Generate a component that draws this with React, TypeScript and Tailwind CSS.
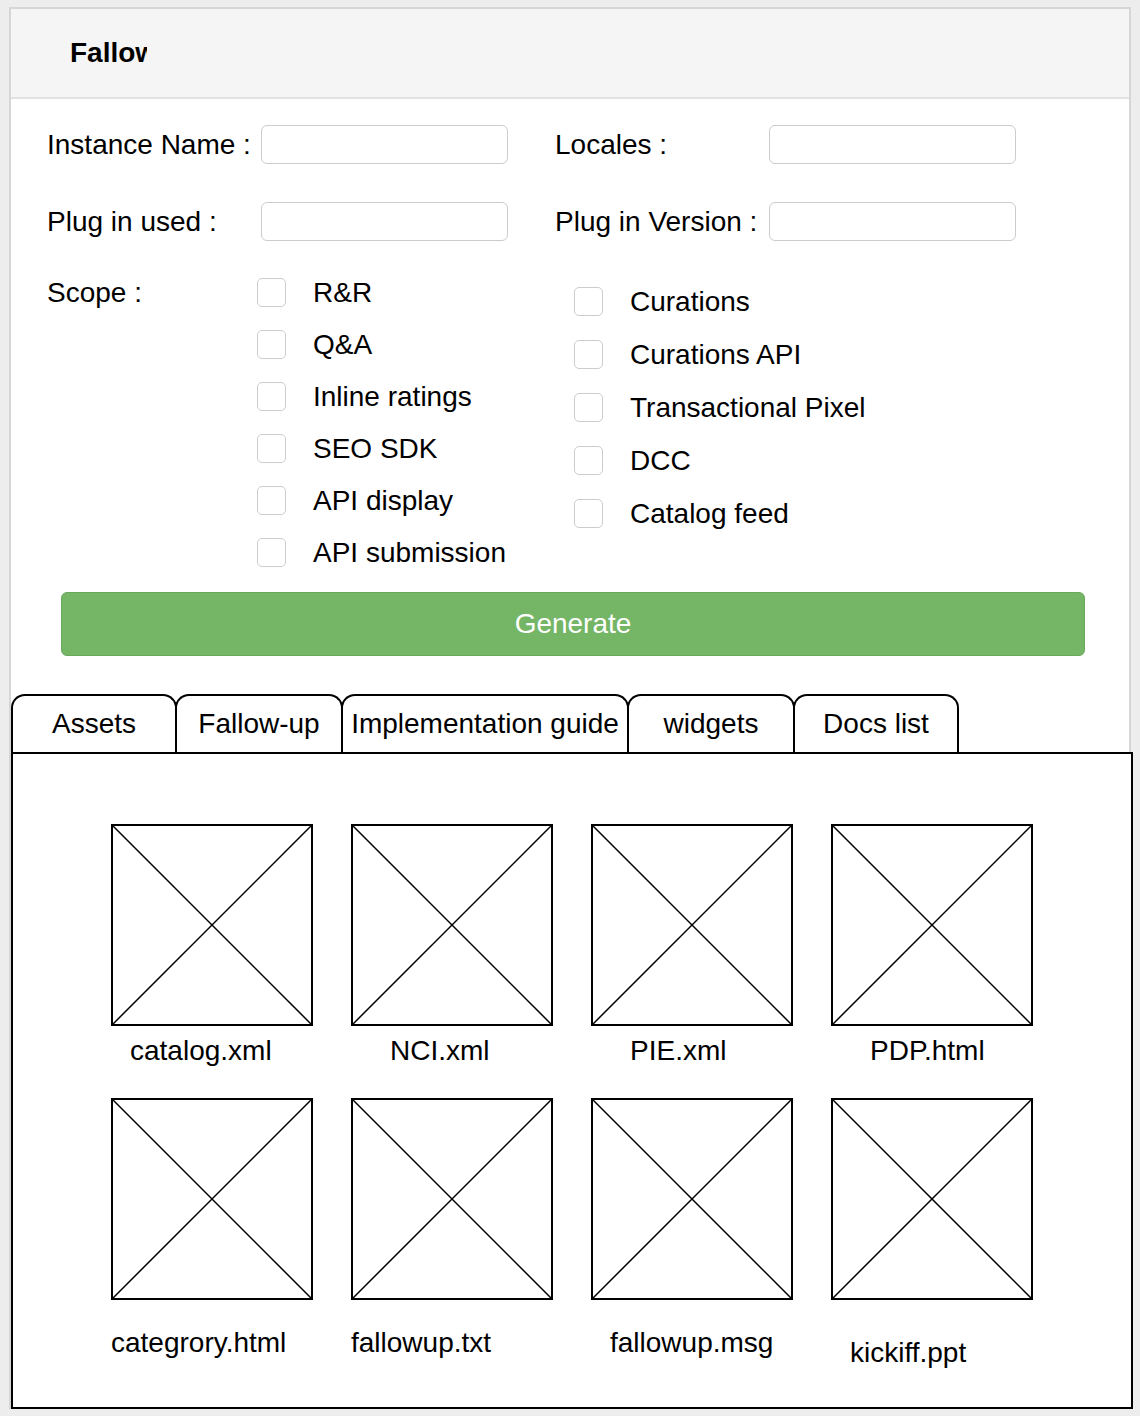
const font = { fontFamily: '"Liberation Sans", Arial, Helvetica, sans-serif' }

const leftScope = ["R&R", "Q&A", "Inline ratings", "SEO SDK", "API display", "API submission"]
const rightScope = ["Curations", "Curations API", "Transactional Pixel", "DCC", "Catalog feed"]

const tabs = [
  { label: "Assets", w: "w-[166px]" },
  { label: "Fallow-up", w: "w-[168px]" },
  { label: "Implementation guide", w: "w-[288px]" },
  { label: "widgets", w: "w-[168px]" },
  { label: "Docs list", w: "w-[166px]" },
]

// label offsets match the mockup, which isn't perfectly centred
const assets = [
  { name: "catalog.xml", cls: "ml-[19px] mt-[9px]" },
  { name: "NCI.xml", cls: "ml-[39px] mt-[9px]" },
  { name: "PIE.xml", cls: "ml-[39px] mt-[9px]" },
  { name: "PDP.html", cls: "ml-[39px] mt-[9px]" },
  { name: "categrory.html", cls: "ml-0 mt-[27px]" },
  { name: "fallowup.txt", cls: "ml-0 mt-[27px]" },
  { name: "fallowup.msg", cls: "ml-[19px] mt-[27px]" },
  { name: "kickiff.ppt", cls: "ml-[19px] mt-[37px]" },
]

function Field({ label }: { label: string }) {
  return (
    <div className="flex h-[39px] items-center">
      <span className="w-[214px] whitespace-nowrap">{label}</span>
      <div className="h-[39px] w-[247px] rounded-[6px] border-[1.5px] border-[#cccccc] bg-white" />
    </div>
  )
}

function Check({ label }: { label: string }) {
  return (
    <div className="flex h-[29px] items-center gap-[27px]">
      <div className="h-[29px] w-[29px] shrink-0 rounded-[5px] border-[1.5px] border-[#cccccc] bg-white" />
      <span className="whitespace-nowrap leading-none">{label}</span>
    </div>
  )
}

function Placeholder() {
  return (
    <div className="relative h-[202px] w-[202px] border-2 border-black bg-white">
      <svg className="absolute inset-0 h-full w-full" viewBox="0 0 198 198" preserveAspectRatio="none">
        <line x1="0" y1="0" x2="198" y2="198" stroke="black" strokeWidth="1.5" />
        <line x1="198" y1="0" x2="0" y2="198" stroke="black" strokeWidth="1.5" />
      </svg>
    </div>
  )
}

export default function App() {
  return (
    <div
      className="h-[1416px] w-[1140px] overflow-hidden bg-[#ededed] pl-[9px] pt-[7px] text-[28px] leading-[32px] text-black"
      style={font}
    >
      <div className="w-[1122px] border-2 border-b-0 border-[#d6d6d6] bg-white">
        {/* Header, title clipped as in the mockup */}
        <div className="flex h-[90px] items-center border-b-2 border-[#e2e2e2] bg-[#f5f5f5] pl-[59px]">
          <div className="w-[77px] overflow-hidden whitespace-nowrap font-bold">Fallow-up</div>
        </div>

        {/* Form */}
        <div className="pl-[36px]">
          <div className="mt-[26px] flex gap-[47px]">
            <Field label="Instance Name :" />
            <Field label="Locales :" />
          </div>
          <div className="mt-[38px] flex gap-[47px]">
            <Field label="Plug in used :" />
            <Field label="Plug in Version :" />
          </div>

          <div className="mt-[37px] flex items-start">
            <div className="flex h-[29px] w-[210px] items-center">Scope :</div>
            <div className="flex w-[317px] flex-col gap-[23px]">
              {leftScope.map((s) => (
                <Check key={s} label={s} />
              ))}
            </div>
            <div className="mt-[9px] flex flex-col gap-[24px]">
              {rightScope.map((s) => (
                <Check key={s} label={s} />
              ))}
            </div>
          </div>
        </div>

        <button className="ml-[50px] mt-[25px] flex h-[64px] w-[1024px] items-center justify-center rounded-[6px] border-[1.5px] border-[#69a85b] bg-[#74b566] text-white">
          Generate
        </button>

        {/* Tabs */}
        <div className="mt-[38px] flex">
          {tabs.map((t, i) => (
            <div
              key={t.label}
              className={`flex h-[58px] items-center justify-center whitespace-nowrap rounded-t-[14px] border-2 border-b-0 border-black bg-white ${t.w} ${i > 0 ? "-ml-[2px]" : ""}`}
            >
              {t.label}
            </div>
          ))}
        </div>
        <div className="h-[657px] w-[1122px] border-2 border-black bg-white pl-[98px] pt-[70px]">
          <div className="grid w-fit grid-cols-4 gap-x-[38px] gap-y-[31px]">
            {assets.map((a) => (
              <div key={a.name} className="flex w-[202px] flex-col">
                <Placeholder />
                <span className={`whitespace-nowrap ${a.cls}`}>{a.name}</span>
              </div>
            ))}
          </div>
        </div>
      </div>
    </div>
  )
}
